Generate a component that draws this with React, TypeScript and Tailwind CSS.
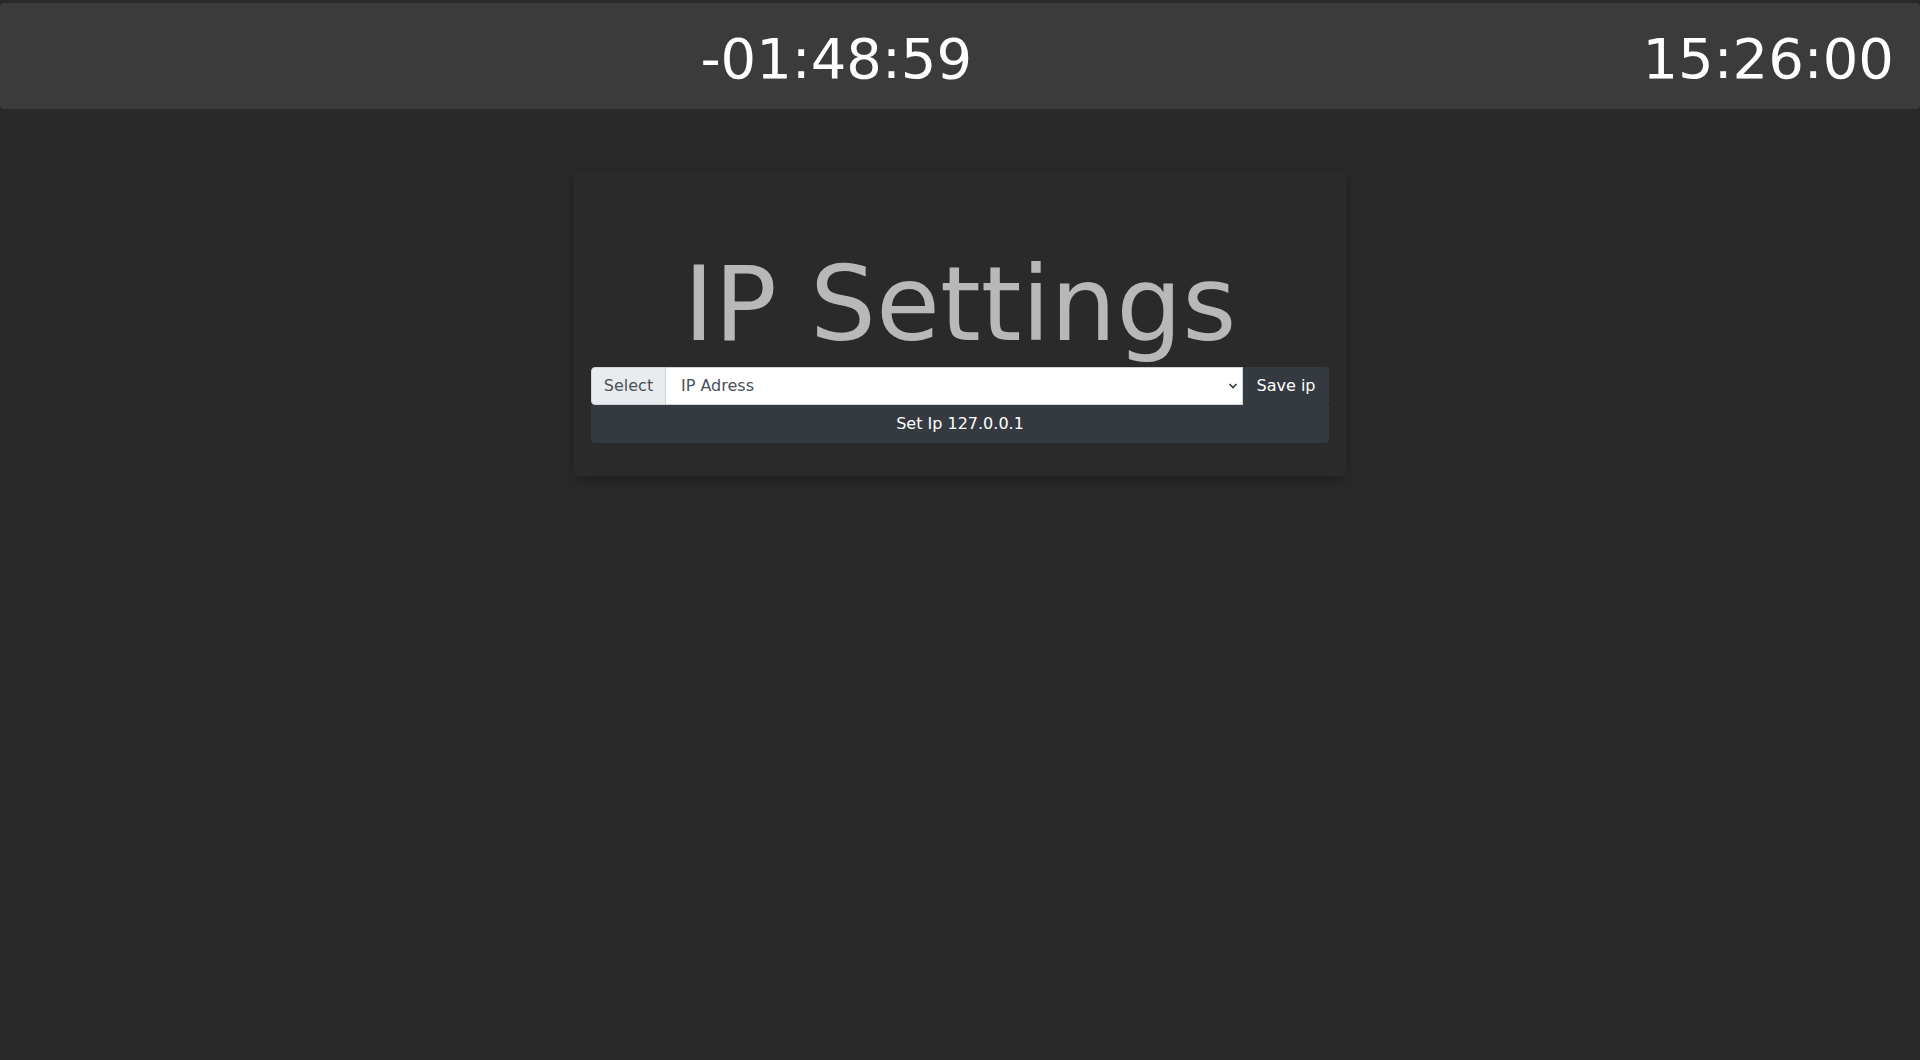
import React from "react";

export default function App() {
  const font = { fontFamily: '"DejaVu Sans", Verdana, sans-serif' };
  return (
    <div className="min-h-[1060px] w-full bg-[#292929] pt-[3px]" style={font}>
      <header className="flex h-[106px] items-center rounded-[4px] bg-[#3b3b3b] pt-[5px] text-white">
        <div className="flex-1 pl-[30px] text-center text-[56px] leading-none">-01:48:59</div>
        <div className="pr-[26px] text-[56px] leading-none">15:26:00</div>
      </header>
      <main className="flex justify-center pt-[62px]">
        <div className="w-[772px] rounded-[4px] bg-[#2a2a2a] px-[17px] pb-[33px] pt-[71px] shadow-[0_4px_12px_rgba(0,0,0,0.25)]">
          <h1 className="text-center text-[104px] leading-[1.2] text-[#b8b8b8]">IP Settings</h1>
          <div className="flex h-[38px] w-full">
            <span className="flex w-[75px] items-center justify-center rounded-l-[4px] border border-[#ced4da] bg-[#e9ecef] text-[16px] text-[#495057]">
              Select
            </span>
            <div className="relative flex flex-1 items-center border border-l-0 border-[#ced4da] bg-white pl-[15px] text-[16px] text-[#495057]">
              IP Adress
              <svg className="absolute right-[4px] top-[14px]" width="10" height="8" viewBox="0 0 10 8">
                <path d="M1.5 2 L5 5.5 L8.5 2" stroke="#343a40" strokeWidth="1.6" fill="none" />
              </svg>
            </div>
            <button className="w-[86px] rounded-r-[4px] bg-[#343a40] text-[16px] text-white">Save ip</button>
          </div>
          <button className="h-[38px] w-full rounded-b-[4px] bg-[#343a40] text-[16px] text-white">Set Ip 127.0.0.1</button>
        </div>
      </main>
    </div>
  );
}
